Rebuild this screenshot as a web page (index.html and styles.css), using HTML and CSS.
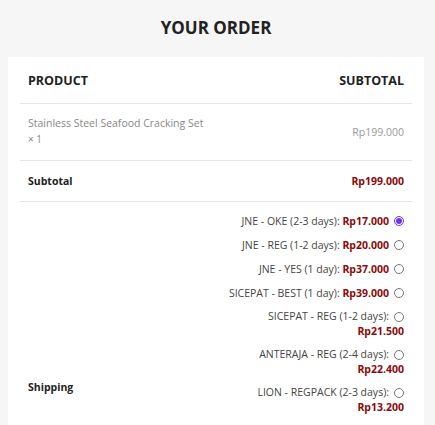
FILE: index.html
```html
<!DOCTYPE html>
<html>
<head>
<meta charset="utf-8">
<link rel="stylesheet" href="styles.css">
</head>
<body>
<h3 class="title">YOUR ORDER</h3>
<div class="card">
  <div class="row head">
    <div class="cell">PRODUCT</div>
    <div class="cell right">SUBTOTAL</div>
  </div>
  <div class="row item">
    <div class="cell name">Stainless Steel Seafood Cracking Set<br><span class="qty">× 1</span></div>
    <div class="cell right price">Rp199.000</div>
  </div>
  <div class="row sub">
    <div class="cell label">Subtotal</div>
    <div class="cell right amount">Rp199.000</div>
  </div>
  <div class="row ship">
    <div class="cell label">Shipping</div>
    <ul class="methods">
      <li><label>JNE - OKE (2-3 days): <b>Rp17.000</b></label><input type="radio" name="s" checked></li>
      <li><label>JNE - REG (1-2 days): <b>Rp20.000</b></label><input type="radio" name="s"></li>
      <li><label>JNE - YES (1 day): <b>Rp37.000</b></label><input type="radio" name="s"></li>
      <li><label>SICEPAT - BEST (1 day): <b>Rp39.000</b></label><input type="radio" name="s"></li>
      <li class="wrap"><label>SICEPAT - REG (1-2 days): </label><input type="radio" name="s"><b>Rp21.500</b></li>
      <li class="wrap"><label>ANTERAJA - REG (2-4 days): </label><input type="radio" name="s"><b>Rp22.400</b></li>
      <li class="wrap"><label>LION - REGPACK (2-3 days): </label><input type="radio" name="s"><b>Rp13.200</b></li>
    </ul>
  </div>
</div>
</body>
</html>
```
FILE: styles.css
```css
html, body { margin: 0; padding: 0; }
body {
  background: #f6f6f6;
  font-family: "Open Sans", "Noto Sans", sans-serif;
  color: #333;
  padding: 0 11px 0 8px;
}
.title {
  margin: 0;
  padding-top: 16px;
  height: 41px;
  text-align: center;
  font-size: 17px;
  font-weight: 700;
  color: #222;
  line-height: 24px;
}
.card {
  background: #fff;
  padding: 0 12px;
  height: 368px;
  overflow: hidden;
}
.row {
  display: flex;
  justify-content: space-between;
  border-bottom: 1px solid #e6e6e6;
  padding: 0 8px;
}
.cell.right { text-align: right; }
.head {
  height: 45px;
  align-items: center;
  font-size: 12.5px;
  font-weight: 700;
  color: #222;
  padding-top: 1px;
}
.item {
  height: 56px;
  align-items: center;
  font-size: 10.5px;
  color: #888;
}
.item .name { line-height: 16px; margin-top: -3px; }
.qty { font-size: 10px; }
.item .price { color: #999; }
.sub {
  height: 39px;
  align-items: center;
  font-size: 10.5px;
  font-weight: 700;
  color: #222;
  padding-bottom: 1px;
}
.amount { color: #8b0a0a; }
.ship {
  border-bottom: none;
  align-items: flex-start;
  padding-top: 11px;
}
.ship .label {
  font-size: 10.5px;
  font-weight: 700;
  color: #222;
  margin-top: 167px;
}
.methods {
  list-style: none;
  margin: 0;
  padding: 0;
  font-size: 10.5px;
  color: #444;
}
.methods li {
  display: flex;
  justify-content: flex-end;
  align-items: center;
  flex-wrap: wrap;
  margin-bottom: 8px;
  line-height: 16px;
}
.methods b { color: #8b0a0a; font-weight: 700; }
.methods li.wrap b { flex-basis: 100%; text-align: right; }
.methods li.wrap { margin-bottom: 8px; line-height: 15px; }
.methods li.wrap:last-child { margin-bottom: 0; }
.methods input {
  margin: 0 0 0 5px;
  width: 10px;
  height: 10px;
  accent-color: #6a35f0;
}
```
